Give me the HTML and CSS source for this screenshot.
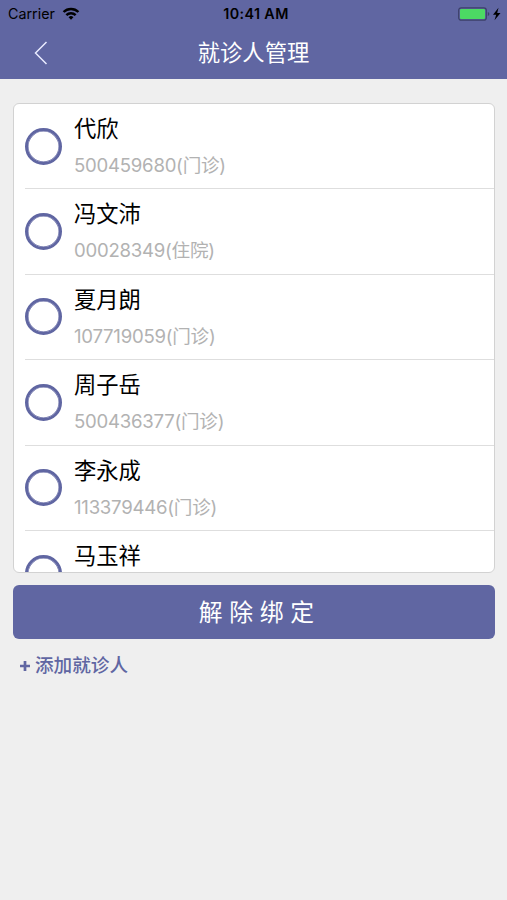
FILE: index.html
```html
<!DOCTYPE html>
<html lang="zh-CN">
<head>
<meta charset="utf-8">
<title>就诊人管理</title>
<link rel="stylesheet" href="styles.css">
</head>
<body>
<header class="header">
  <div class="status">
    <div class="status-left"><span class="carrier">Carrier</span>
      <svg class="wifi" width="18" height="13" viewBox="0 0 18 14"><g fill="none" stroke="#000" stroke-width="2.6"><path d="M1 5.400a11.300 11.300 0 0 1 16 0"/><path d="M4 8.800a7 7 0 0 1 10 0"/></g><path d="M9 13.800l-2.600-2.700a3.700 3.700 0 0 1 5.200 0z"/></svg>
    </div>
    <span class="time">10:41 AM</span>
    <div class="status-right">
      <svg width="44" height="14" viewBox="0 0 44 14"><rect x=".7" y=".8" width="27.600" height="12.400" rx="2.500" fill="none" stroke="#3c4069" stroke-width="1.200"/><rect x="2" y="2" width="25" height="10" rx="1.200" fill="#4cd964"/><path d="M29.800 5v4q1.600-.5 1.600-2t-1.600-2z" fill="#3c4069"/><path d="M40.500 .8l-5.500 7h3.200l-1.700 5.400 6-7.200h-3.300z"/></svg>
    </div>
  </div>
  <div class="nav">
    <svg class="back" width="14" height="24" viewBox="0 0 14 24"><path d="M12.500 1L1.500 12l11 11" fill="none" stroke="#e9ebff" stroke-width="1.500"/></svg>
    <h1>就诊人管理</h1>
  </div>
</header>
<main>
  <ul class="list">
    <li><i class="radio"></i><div class="info"><b>代欣</b><span>500459680(门诊)</span></div></li>
    <li><i class="radio"></i><div class="info"><b>冯文沛</b><span>00028349(住院)</span></div></li>
    <li><i class="radio"></i><div class="info"><b>夏月朗</b><span>107719059(门诊)</span></div></li>
    <li><i class="radio"></i><div class="info"><b>周子岳</b><span>500436377(门诊)</span></div></li>
    <li><i class="radio"></i><div class="info"><b>李永成</b><span>113379446(门诊)</span></div></li>
    <li><i class="radio"></i><div class="info"><b>马玉祥</b></div></li>
  </ul>
  <button class="unbind">解 除 绑 定</button>
  <a class="add"><svg class="plus" width="10" height="10" viewBox="0 0 10 10"><path d="M5 0v10M0 5h10" stroke="#6066a2" stroke-width="2.700"/></svg>添加就诊人</a>
</main>
</body>
</html>
```
FILE: styles.css
```css
* { box-sizing: border-box; }
body { margin: 0; height: 900px; overflow: hidden; background: #efefef; color: #000; font-family: Inter, "Noto Sans CJK SC", sans-serif; }
.header { height: 79px; background: #6066a2; }
.status { height: 27px; display: grid; grid-template-columns: 1fr auto 1fr; align-items: center; padding: 0 5px 0 8px; font-size: 14px; }
.status-left { display: flex; align-items: center; gap: 7px; }
.carrier { font-size: 14.300px; }
.status-right { display: flex; justify-content: flex-end; }
.time { font-weight: 600; font-size: 14.300px; letter-spacing: .4px; padding-left: 2px; }
.nav { height: 52px; display: grid; grid-template-columns: 48px 1fr 48px; align-items: center; }
.back { justify-self: end; }
h1 { margin: 0; text-align: center; color: #fff; font-size: 22.300px; font-weight: 400; line-height: 50px; }
main { padding: 24px 12px 0 13px; }
.list { list-style: none; margin: 0; padding: 0; height: 470px; overflow: hidden; background: #fff; border: 1px solid #d2d2d2; border-radius: 6px; }
.list li { height: 85.500px; display: flex; margin-left: 11px; border-bottom: 1px solid #dedede; }
.list li:first-child { height: 85.200px; }
.radio { width: 37px; height: 37px; margin-top: 23.600px; flex: none; border: 3px solid #6066a2; box-shadow: inset 0 0 0 .5px #6066a2; border-radius: 50%; }
.info { margin-left: 12px; display: flex; flex-direction: column; }
.info b { font-size: 22.300px; font-weight: 400; line-height: 34px; margin-top: 8px; }
.info span { font-size: 18.600px; letter-spacing: -.25px; line-height: 28px; margin-top: 5px; color: #b2b2b2; }
.unbind { display: block; width: 100%; height: 54px; margin: 12px 0 0; padding: 0 0 3px 5px; border: 0; border-radius: 6px; background: #6066a2; color: #fff; font: 23.800px Inter, "Noto Sans CJK SC", sans-serif; }
.add { display: flex; align-items: center; margin: 12px 0 0 7px; color: #6066a2; font-size: 18.600px; font-weight: 500; line-height: 28px; }
.plus { margin: 2px 5px 0 0; }
```
